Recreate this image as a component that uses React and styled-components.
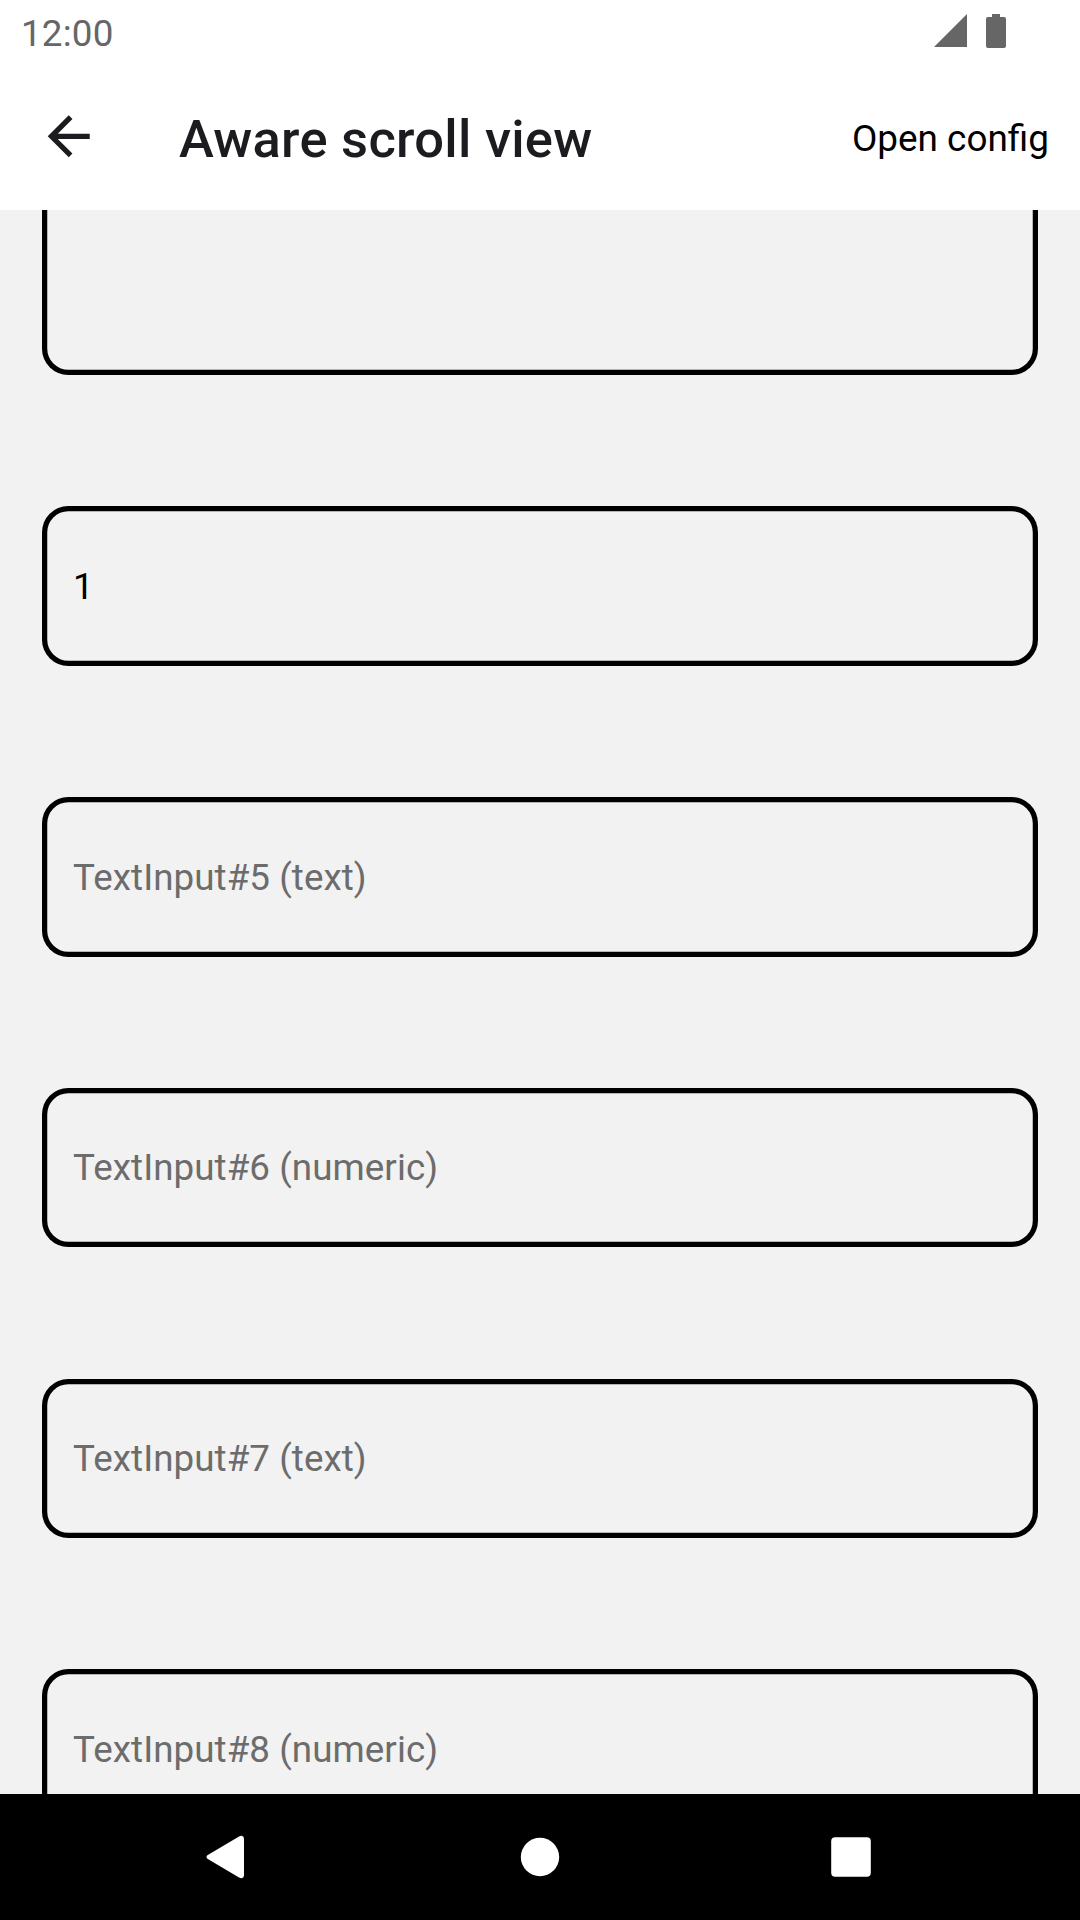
import React from "react";
import styled, { createGlobalStyle } from "styled-components";

const Global = createGlobalStyle`
  * { box-sizing: border-box; }
  body { margin: 0; background: #fff; font-family: Roboto, "Liberation Sans", sans-serif; }
`;

const Screen = styled.div`
  display: flex;
  flex-direction: column;
  width: 1080px;
  height: 1920px;
  overflow: hidden;
`;

const StatusBar = styled.div`
  display: flex;
  justify-content: space-between;
  height: 63px;
  padding: 0 74px 0 21px;
  background: #fff;
  color: #666;
`;

const Clock = styled.span`
  font-size: 36.75px;
  line-height: 68px;
  letter-spacing: 0.2px;
`;

const StatusIcons = styled.div`
  display: flex;
  align-items: flex-start;
  gap: 19px;
  padding-top: 14px;
`;

const Header = styled.header`
  display: flex;
  align-items: center;
  height: 147px;
  padding: 0 31px 0 48px;
  background: #fff;
`;

const BackButton = styled.button`
  display: flex;
  width: 131px;
  padding: 0 0 1px;
  border: 0;
  background: none;
  color: #1c1b1f;
`;

const Title = styled.h1`
  flex: 1;
  margin: 0;
  padding-top: 5px;
  font-size: 52.5px;
  font-weight: 500;
  line-height: 62px;
  letter-spacing: 0.27px;
  color: #1c1b1f;
`;

const HeaderAction = styled.span`
  padding-top: 5px;
  font-size: 36.9px;
  line-height: 44px;
  color: #000;
`;

const ScrollArea = styled.main`
  display: flex;
  flex-direction: column;
  justify-content: flex-end;
  height: 1584px;
  padding: 0 42px;
  overflow: hidden;
  background: #f2f2f2;
`;

const Fields = styled.div`
  display: flex;
  flex-direction: column;
  flex-shrink: 0;
  margin-bottom: -35px;
`;

const Field = styled.div`
  flex-shrink: 0;
  height: ${(p) => p.$height}px;
  margin-top: ${(p) => p.$gap || 131}px;
  padding: ${(p) => p.$inset}px 31px 0;
  border-radius: 26.25px;
  box-shadow: inset 0 0 0 5.25px #000;
  font-size: 36.75px;
  line-height: 44px;
  letter-spacing: 0.06px;
  color: ${(p) => (p.$filled ? "#000" : "#6c6c6c")};
`;

const NavBar = styled.nav`
  display: flex;
  align-items: center;
  justify-content: space-between;
  height: 126px;
  padding: 0 209px 0 206px;
  background: #000;
`;

const NavButton = styled.span`
  display: flex;
  width: 40px;
  justify-content: ${(p) => p.$align || "center"};
  margin-left: ${(p) => p.$shift || 0}px;
`;

const fields = [
  { text: "", height: 260, inset: 59 },
  { text: "1", filled: true, height: 160, inset: 59 },
  { text: "TextInput#5 (text)", height: 160, inset: 59 },
  { text: "TextInput#6 (numeric)", height: 159, inset: 58 },
  { text: "TextInput#7 (text)", height: 159, inset: 58, gap: 132 },
  { text: "TextInput#8 (numeric)", height: 160, inset: 59 },
];

export default function App() {
  return (
    <Screen>
      <Global />
      <StatusBar>
        <Clock>12:00</Clock>
        <StatusIcons>
          <svg width="33" height="33" viewBox="0 0 33 33" fill="#666">
            <path d="M33 0V33H0Z" />
          </svg>
          <svg width="20" height="34" viewBox="0 0 20 34" fill="#666">
            <path d="M6 0H14V3H18Q20 3 20 5V32Q20 34 18 34H2Q0 34 0 32V5Q0 3 2 3H6Z" />
          </svg>
        </StatusIcons>
      </StatusBar>
      <Header>
        <BackButton aria-label="Back">
          <svg width="42" height="42" viewBox="0.1 -0.1 16 16" overflow="visible" fill="currentColor">
            <path d="M16 7H3.83L9.42 1.41L8 0L0 8L8 16L9.41 14.59L3.83 9H16V7Z" />
          </svg>
        </BackButton>
        <Title>Aware scroll view</Title>
        <HeaderAction>Open config</HeaderAction>
      </Header>
      <ScrollArea>
        <Fields>
          {fields.map((f, i) => (
            <Field key={i} $filled={f.filled} $height={f.height} $inset={f.inset} $gap={f.gap}>
              {f.text}
            </Field>
          ))}
        </Fields>
      </ScrollArea>
      <NavBar>
        <NavButton $align="flex-start">
          <svg width="38" height="44" viewBox="0 0 38 44" fill="#fff">
            <path d="M1.4 20.3L33 1.5Q37.5 -0.5 38 3.5V40.5Q37.5 44.5 33 42.5L1.4 23.7Q-0.4 22 1.4 20.3Z" />
          </svg>
        </NavButton>
        <NavButton $shift={3}>
          <svg width="40" height="40" viewBox="0 0 40 40" fill="#fff">
            <circle cx="20" cy="20" r="19.2" />
          </svg>
        </NavButton>
        <NavButton>
          <svg width="40" height="40" viewBox="0 0 40 40" fill="#fff">
            <rect x="0.2" y="0.2" width="39.6" height="39.6" rx="4" />
          </svg>
        </NavButton>
      </NavBar>
    </Screen>
  );
}
